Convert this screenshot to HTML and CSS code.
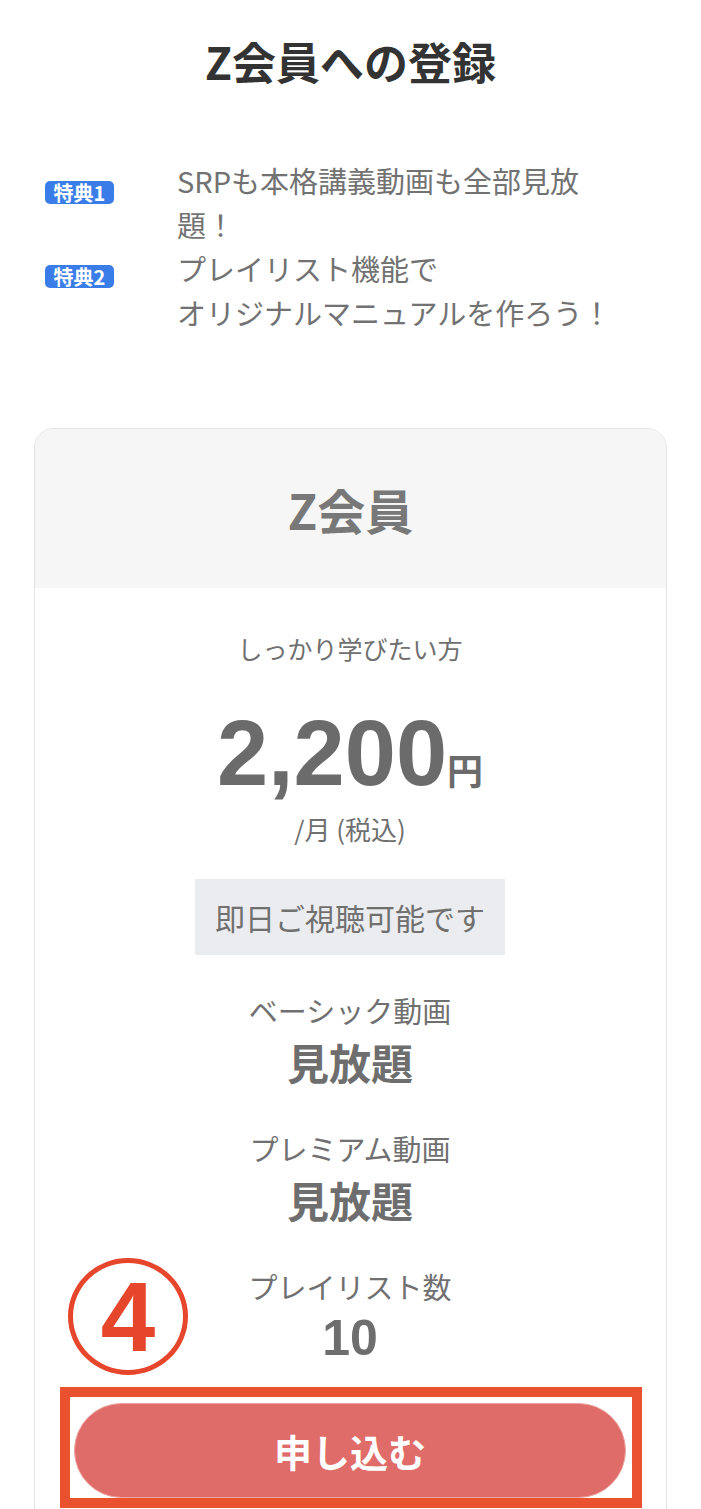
FILE: index.html
```html
<!doctype html>
<html lang="ja">
  <head>
    <meta charset="UTF-8" />
    <meta name="viewport" content="width=device-width, initial-scale=1.0" />
    <title>Z会員への登録</title>
    <link rel="stylesheet" href="styles.css">
  </head>
  <body>
    <!-- Page title -->
    <h1 class="page-title">Z会員への登録</h1>

    <!-- Perks list -->
    <div class="perks">
      <div class="perk">
        <span class="perk-badge">特典1</span>
        <p class="perk-text">SRPも本格講義動画も全部見放題！</p>
      </div>
      <div class="perk">
        <span class="perk-badge">特典2</span>
        <p class="perk-text">プレイリスト機能で<br />オリジナルマニュアルを作ろう！</p>
      </div>
    </div>

    <!-- Plan card -->
    <div class="plan-card">
      <div class="plan-head">Z会員</div>
      <div class="plan-body">
        <p class="audience">しっかり学びたい方</p>
        <div class="price">2,200<span class="price-unit">円</span></div>
        <p class="price-note">/月 (税込)</p>
        <div class="same-day">即日ご視聴可能です</div>

        <div class="features">
          <div class="feature">
            <div class="feature-label">ベーシック動画</div>
            <div class="feature-value">見放題</div>
          </div>
          <div class="feature">
            <div class="feature-label">プレミアム動画</div>
            <div class="feature-value">見放題</div>
          </div>
          <div class="feature">
            <div class="feature-label">プレイリスト数</div>
            <div class="feature-value num">10</div>
          </div>
        </div>

        <button class="apply-btn">申し込む</button>
      </div>

      <!-- Tutorial markers drawn over the card -->
      <div class="mark-circle">4</div>
      <div class="mark-box"></div>
    </div>
  </body>
</html>
```

FILE: styles.css
```css
body {
  margin: 0;
  font-family: "Noto Sans CJK JP", sans-serif;
  color: #707070;
  background: #fff;
}
p {
  margin: 0;
}
.page-title {
  margin: 0;
  padding-top: 32px;
  font-size: 44px;
  line-height: 58px;
  font-weight: bold;
  text-align: center;
  color: #333;
}

/* perks */
.perks {
  margin-top: 68px;
  padding-left: 45px;
}
.perk {
  display: flex;
  align-items: flex-start;
}
.perk-badge {
  flex: none;
  width: 69px;
  height: 23px;
  margin-top: 23px;
  margin-right: 63px;
  border-radius: 5px;
  background: #3b7de8;
  color: #fff;
  font-size: 20px;
  font-weight: bold;
  line-height: 23px;
  text-align: center;
}
.perk + .perk .perk-badge {
  margin-top: 19px;
}
.perk-text {
  width: 448px;
  font-size: 29px;
  line-height: 44px;
  color: #727272;
}

/* plan card */
.plan-card {
  position: relative;
  width: 633px;
  box-sizing: border-box;
  margin: 94px auto 0;
  padding-bottom: 80px;
  border: 1px solid #e3e3e3;
  border-radius: 20px;
  overflow: hidden;
}
.plan-head {
  height: 159px;
  display: flex;
  align-items: center;
  justify-content: center;
  background: #f6f6f6;
  font-size: 48px;
  font-weight: bold;
  color: #787878;
}
.plan-body {
  padding: 42px 40px 0 39px;
  text-align: center;
}
.audience {
  font-size: 25px;
  line-height: 36px;
}
.price {
  margin-top: 41px;
  font-family: "Liberation Sans", Arial, sans-serif;
  font-size: 92px;
  font-weight: bold;
  line-height: 1;
  color: #6b6b6b;
}
.price-unit {
  font-family: "Noto Sans CJK JP", sans-serif;
  font-size: 36px;
}
.price-note {
  margin-top: 13px;
  font-size: 26px;
  line-height: 34px;
}
.same-day {
  width: fit-content;
  margin: 33px auto 0;
  padding: 0 20px;
  background: #ebecef;
  font-size: 30px;
  line-height: 76px;
}
.features {
  margin-top: 33px;
}
.feature + .feature {
  margin-top: 34px;
}
.feature-label {
  font-size: 29px;
  line-height: 44px;
}
.feature-value {
  font-size: 42px;
  font-weight: bold;
  line-height: 60px;
  color: #6e6e6e;
}
.feature-value.num {
  font-family: "Liberation Sans", Arial, sans-serif;
  font-size: 50px;
}
.apply-btn {
  display: block;
  width: 100%;
  height: 95px;
  margin-top: 35px;
  border: 1px solid #eca7a3;
  border-radius: 48px;
  background: #e06c6a;
  color: #fff;
  font-family: inherit;
  font-size: 38px;
  font-weight: bold;
  cursor: pointer;
}

/* markers */
.mark-circle {
  position: absolute;
  left: 33px;
  top: 829px;
  width: 120px;
  height: 117px;
  box-sizing: border-box;
  border: 5px solid #e6462b;
  border-radius: 50%;
  display: flex;
  align-items: center;
  justify-content: center;
  font-family: "Liberation Sans", Arial, sans-serif;
  font-size: 98px;
  font-weight: bold;
  line-height: 1;
  color: #e6462b;
}
.mark-box {
  position: absolute;
  left: 25px;
  top: 958px;
  width: 582px;
  height: 121px;
  box-sizing: border-box;
  border: 10px solid #e9512f;
}
```
